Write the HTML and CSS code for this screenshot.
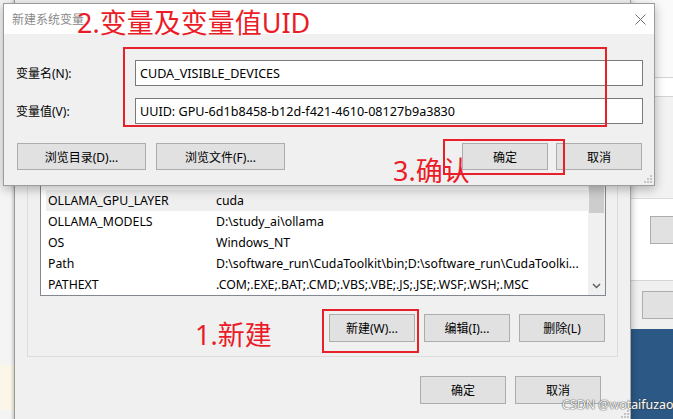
FILE: index.html
```html
<!DOCTYPE html>
<html lang="zh-CN">
<head>
<meta charset="utf-8">
<title>新建系统变量</title>
<link rel="stylesheet" href="styles.css">
</head>
<body>
<div class="desk">
  <div class="strip-tint"></div>

  <div class="side-win">
    <div class="sw-a"></div>
    <div class="sw-b"></div>
    <div class="sw-c"></div>
    <div class="sw-d"><div class="sw-btn sw-btn1"></div></div>
    <div class="sw-e"><div class="sw-btn sw-btn2"></div></div>
    <div class="sw-desk"></div>
  </div>

  <div class="back-win">
    <div class="group">
      <div class="list">
        <div class="rows">
          <div class="row sel"><span>OLLAMA_GPU_LAYER</span><span>cuda</span></div>
          <div class="row"><span>OLLAMA_MODELS</span><span>D:\study_ai\ollama</span></div>
          <div class="row"><span>OS</span><span>Windows_NT</span></div>
          <div class="row"><span>Path</span><span>D:\software_run\CudaToolkit\bin;D:\software_run\CudaToolki...</span></div>
          <div class="row"><span>PATHEXT</span><span>.COM;.EXE;.BAT;.CMD;.VBS;.VBE;.JS;.JSE;.WSF;.WSH;.MSC</span></div>
        </div>
        <div class="vscroll">
          <div class="vs-arrow"></div>
          <div class="vs-thumb"></div>
          <div class="vs-track"></div>
          <div class="vs-arrow vs-down">
            <svg width="9" height="6" viewBox="0 0 9 6"><path d="M1 1 L4.5 4.5 L8 1" fill="none" stroke="#606060" stroke-width="1.5"/></svg>
          </div>
        </div>
      </div>
      <div class="list-btns">
        <div class="btn btn-sm">新建(W)...</div>
        <div class="btn btn-sm">编辑(I)...</div>
        <div class="btn btn-sm">删除(L)</div>
      </div>
    </div>
    <div class="foot-btns">
      <div class="btn btn-sm">确定</div>
      <div class="btn btn-sm">取消</div>
    </div>
    <svg class="grip" width="9" height="9" viewBox="0 0 9 9"><g fill="#c4c4c4"><rect x="6" y="0" width="2" height="2"/><rect x="3" y="3" width="2" height="2"/><rect x="6" y="3" width="2" height="2"/><rect x="0" y="6" width="2" height="2"/><rect x="3" y="6" width="2" height="2"/><rect x="6" y="6" width="2" height="2"/></g></svg>
  </div>

  <div class="dlg">
    <div class="titlebar">
      <span class="title">新建系统变量</span>
      <svg class="close" width="11" height="11" viewBox="0 0 11 11"><path d="M0.5 0.5 L10.5 10.5 M10.5 0.5 L0.5 10.5" stroke="#6e6e6e" stroke-width="1" fill="none"/></svg>
    </div>
    <div class="dlg-body">
      <div class="form">
        <label class="lbl">变量名(N):</label>
        <div class="field">CUDA_VISIBLE_DEVICES</div>
        <label class="lbl">变量值(V):</label>
        <div class="field">UUID: GPU-6d1b8458-b12d-f421-4610-08127b9a3830</div>
      </div>
      <div class="dlg-btns">
        <div class="btn btn-wide">浏览目录(D)...</div>
        <div class="btn btn-wide">浏览文件(F)...</div>
        <div class="spacer"></div>
        <div class="btn btn-sm">确定</div>
        <div class="btn btn-sm">取消</div>
      </div>
    </div>
    <svg class="grip" width="9" height="9" viewBox="0 0 9 9"><g fill="#c4c4c4"><rect x="6" y="0" width="2" height="2"/><rect x="3" y="3" width="2" height="2"/><rect x="6" y="3" width="2" height="2"/><rect x="0" y="6" width="2" height="2"/><rect x="3" y="6" width="2" height="2"/><rect x="6" y="6" width="2" height="2"/></g></svg>
  </div>

  <div class="mark box-vars"></div>
  <div class="mark box-ok"></div>
  <div class="mark box-new"></div>
  <div class="note note-2">2.变量及变量值UID</div>
  <div class="note note-3">3.确认</div>
  <div class="note note-1">1.新建</div>

  <div class="watermark">CSDN @wotaifuzao</div>
</div>
</body>
</html>
```

FILE: styles.css
```css
* { box-sizing: border-box; }

html, body {
  margin: 0;
  padding: 0;
}

body {
  width: 673px;
  height: 419px;
  overflow: hidden;
  background: #f4f4f4;
  font-family: "Noto Sans", "Noto Sans CJK SC", sans-serif;
  font-size: 12px;
  color: #000;
}

.desk {
  position: relative;
  width: 673px;
  height: 419px;
  overflow: hidden;
}

.strip-tint {
  position: absolute;
  left: 0;
  top: 365px;
  width: 14px;
  height: 45px;
  background: #fbf6e7;
}

/* window on the right, behind */
.side-win {
  position: absolute;
  left: 631px;
  top: 0;
  width: 60px;
  height: 419px;
  display: flex;
  flex-direction: column;
}
.sw-a { height: 78px; background: #fafafa; border-bottom: 1px solid #d4d4d4; }
.sw-b { height: 19px; background: #ffffff; border-bottom: 1px solid #d4d4d4; }
.sw-c { height: 102px; background: #f2f2f2; border-bottom: 1px solid #dcdcdc; }
.sw-d { height: 82px; background: #ffffff; border-bottom: 1px solid #d4d4d4; padding: 17px 0 0 19px; }
.sw-e { height: 48px; background: #f0f0f0; padding: 10px 0 0 11px; }
.sw-desk { flex: 1; background: #2b5884; }
.sw-btn {
  height: 28px;
  background: #e1e1e1;
  border: 1px solid #adadad;
  width: 60px;
}

/* environment variables window, behind */
.back-win {
  position: absolute;
  left: 14px;
  top: 0;
  width: 617px;
  height: 430px;
  background: #f0f0f0;
  border-left: 1px solid #9a9a9a;
  border-right: 1px solid #a9a9a9;
  box-shadow: -1px 0 3px rgba(0,0,0,0.18), 2px 0 6px rgba(0,0,0,0.18);
  padding: 130px 29px 0 12px;
}

.group {
  border: 1px solid #dcdcdc;
  margin-right: -17px;
  padding: 17px 11px 14px 12px;
}

.list {
  height: 148px;
  background: #fff;
  border: 1px solid #828790;
  display: flex;
}

.rows {
  flex: 1;
  min-width: 0;
  display: flex;
  flex-direction: column;
  justify-content: flex-end;
  overflow: hidden;
  padding-left: 5px;
}

.row {
  flex: none;
  height: 21px;
  display: grid;
  grid-template-columns: 168px 1fr;
  align-items: center;
  padding-left: 2px;
  white-space: nowrap;
  font-size: 12.3px;
}
.row span { overflow: hidden; }
.row.sel { background: #efefef; }

.vscroll {
  width: 17px;
  background: #f0f0f0;
  display: flex;
  flex-direction: column;
}
.vs-arrow { height: 17px; }
.vs-thumb { height: 47px; background: #cdcdcd; margin: 0 1px; }
.vs-track { flex: 1; }
.vs-down {
  display: flex;
  align-items: center;
  justify-content: center;
  padding-bottom: 1px;
}

.list-btns {
  display: flex;
  justify-content: flex-end;
  gap: 9px;
  margin-top: 18px;
  margin-right: 1px;
}

.foot-btns {
  display: flex;
  justify-content: flex-end;
  gap: 9px;
  margin-top: 19px;
}

.btn {
  height: 28px;
  background: #e1e1e1;
  border: 1px solid #adadad;
  display: flex;
  align-items: center;
  justify-content: center;
  font-size: 12px;
  white-space: nowrap;
}
.btn-sm { width: 86px; }
.btn-wide { width: 129px; }

.grip {
  position: absolute;
  right: 1px;
  bottom: 1px;
}
.back-win .grip { bottom: auto; top: 410px; right: 0; }

/* front dialog */
.dlg {
  position: absolute;
  left: 3px;
  top: 3px;
  width: 652px;
  height: 183px;
  background: #f0f0f0;
  border: 1px solid #9c9c9c;
  box-shadow: 0 3px 10px rgba(0,0,0,0.28);
}

.titlebar {
  height: 30px;
  background: #fff;
  display: flex;
  align-items: center;
  padding: 0 8px 0 8px;
}
.title {
  flex: 1;
  color: #8a8a8a;
  font-size: 12px;
}
.close { display: block; }

.dlg-body {
  padding: 26px 11px 0 12px;
}

.form {
  display: grid;
  grid-template-columns: 119px 1fr;
  row-gap: 12px;
  align-items: center;
}
.lbl { font-size: 12px; }
.field {
  height: 26px;
  background: #fff;
  border: 1px solid #7a7a7a;
  padding-left: 4px;
  display: flex;
  align-items: center;
  white-space: nowrap;
  font-size: 12.6px;
}

.dlg-btns {
  display: flex;
  margin-top: 19px;
  padding: 0 1px;
  gap: 10px;
}
.dlg-btns .btn { height: 27px; }
.dlg-btns .spacer { flex: 1; }
.dlg-btns .btn-sm + .btn-sm { margin-left: -2px; }

/* annotations */
.mark {
  position: absolute;
  border: 2px solid #e8202a;
}
.box-vars { left: 123px; top: 47px; width: 484px; height: 80px; }
.box-ok { left: 443px; top: 139px; width: 122px; height: 36px; }
.box-new { left: 322px; top: 309px; width: 97px; height: 44px; }

.note {
  position: absolute;
  color: #ea1c27;
  font-size: 27px;
  line-height: 27px;
  white-space: nowrap;
}
.note-2 { left: 77px; top: 9px; }
.note-3 { left: 393px; top: 157px; }
.note-1 { left: 195px; top: 321px; }

.watermark {
  position: absolute;
  left: 562px;
  top: 398px;
  font-size: 12.4px;
  line-height: 14px;
  color: #f8f8f8;
  text-shadow: 0 0 1px #4a4a4a, 0 0 1px #5a5a5a, 0 0 2px rgba(0,0,0,0.25);
  white-space: nowrap;
}
```
